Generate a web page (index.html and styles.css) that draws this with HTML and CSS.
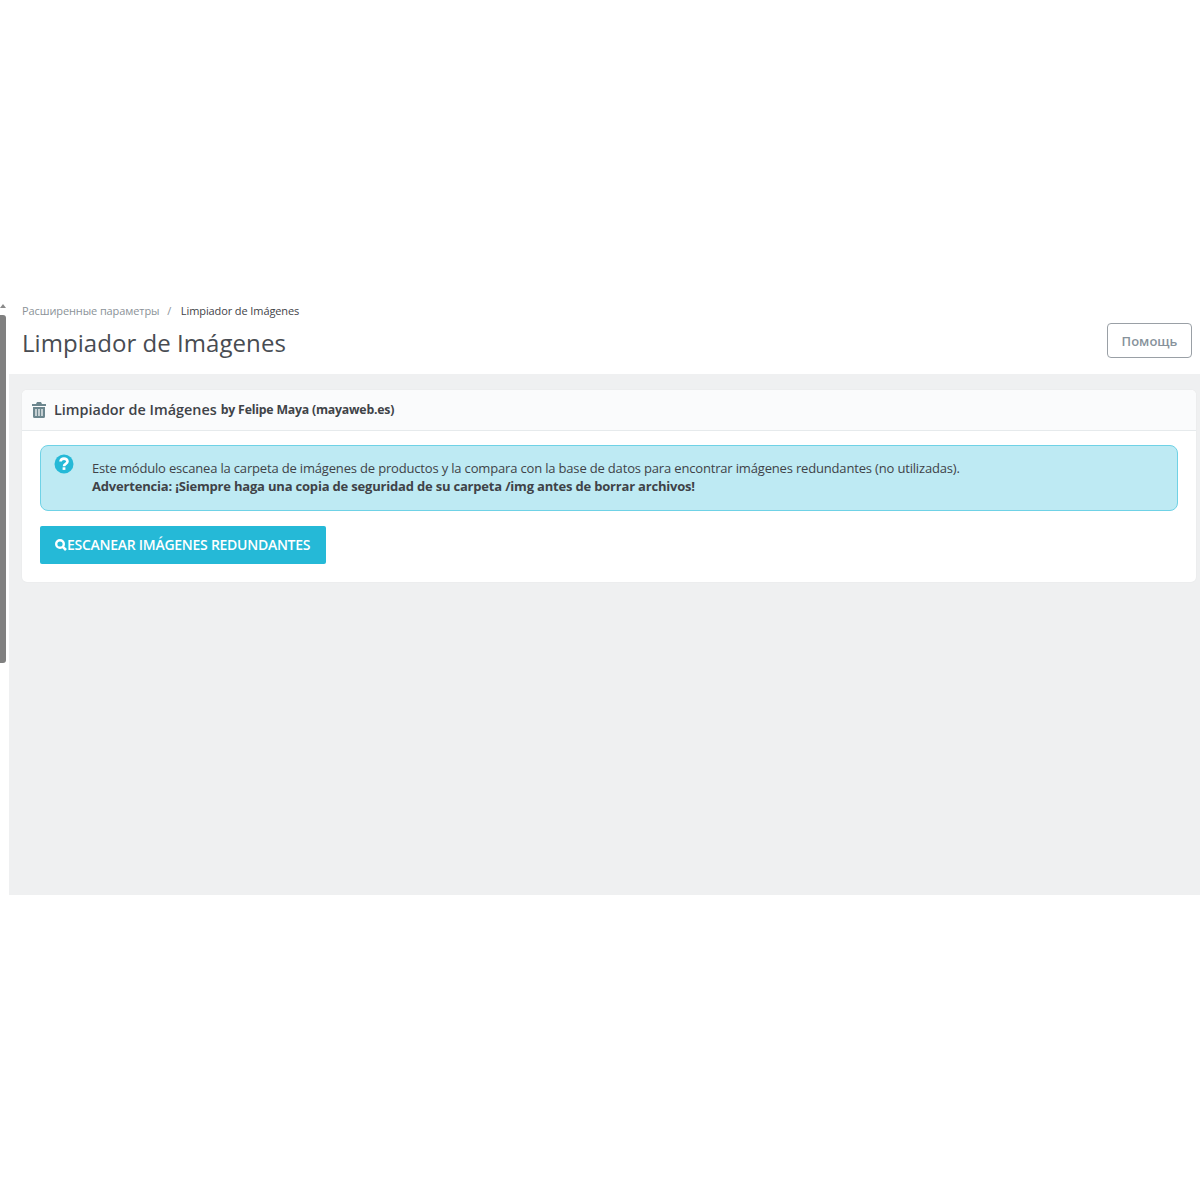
FILE: index.html
```html
<!DOCTYPE html>
<html lang="en">
<head>
    <meta charset="UTF-8">
    <title>Limpiador de Imágenes</title>
    <link rel="stylesheet" href="styles.css">
</head>
<body>
    <div class="screen">
        <!-- Scrollbar -->
        <div class="rail">
            <span class="rail-arrow"></span>
            <span class="rail-thumb"></span>
        </div>

        <div class="main">
            <!-- Header -->
            <header class="page-head">
                <div>
                    <div class="crumbs">
                        <span class="crumb-parent">Расширенные параметры</span>
                        <span class="crumb-sep">/</span>
                        <span>Limpiador de Imágenes</span>
                    </div>
                    <h1>Limpiador de Imágenes</h1>
                </div>
                <button class="help-btn">Помощь</button>
            </header>

            <!-- Content -->
            <div class="content">
                <div class="panel">
                    <div class="panel-head">
                        <svg class="trash" viewBox="0 0 14 16" width="14" height="16">
                            <path fill="#6c868e" d="M5 0h4l1 2h4v2H0V2h4zM1 5h12v9.500a1.500 1.500 0 0 1-1.500 1.500h-9A1.500 1.500 0 0 1 1 14.500z"/>
                            <path stroke="#fff" stroke-width="1.200" d="M4 7v7M7 7v7M10 7v7"/>
                        </svg>
                        <span class="panel-title">Limpiador de Imágenes</span>
                        <span class="panel-by">by Felipe Maya (mayaweb.es)</span>
                    </div>
                    <div class="panel-body">
                        <div class="alert">
                            <svg class="alert-icon" viewBox="0 0 20 20" width="20" height="20">
                                <circle cx="10" cy="10" r="9.500" fill="#25b9d7"/>
                                <path fill="none" stroke="#fff" stroke-width="2.600" d="M6.500 7.600c0-2 1.500-3 3.500-3s3.500 1.100 3.500 2.900c0 2.500-3.500 2.300-3.500 4.700"/>
                                <rect x="8.600" y="13.300" width="2.800" height="2.600" fill="#fff"/>
                            </svg>
                            <p>Este módulo escanea la carpeta de imágenes de productos y la compara con la base de datos para encontrar imágenes redundantes (no utilizadas).<br>
                            <strong>Advertencia: ¡Siempre haga una copia de seguridad de su carpeta /img antes de borrar archivos!</strong></p>
                        </div>
                        <button class="scan-btn">
                            <svg viewBox="0 0 12 12" width="12" height="12">
                                <circle cx="5" cy="5" r="3.800" fill="none" stroke="#fff" stroke-width="2.400"/>
                                <path stroke="#fff" stroke-width="2.600" d="M7.800 7.800L11 11"/>
                            </svg>ESCANEAR IMÁGENES REDUNDANTES
                        </button>
                    </div>
                </div>
            </div>
        </div>
    </div>
</body>
</html>
```

FILE: styles.css
```css
body {
    margin: 0;
    background-color: #fff;
    font-family: "Open Sans", sans-serif;
    color: #3f4348;
}
.screen {
    display: flex;
    margin-top: 300px;
    height: 595px;
}
.rail {
    width: 9px;
    flex-shrink: 0;
    display: flex;
    flex-direction: column;
}
.rail-arrow {
    width: 0;
    height: 0;
    margin-top: 4px;
    border-left: 3px solid transparent;
    border-right: 3px solid transparent;
    border-bottom: 4px solid #8a8a8a;
}
.rail-thumb {
    width: 6px;
    height: 348px;
    margin-top: 7px;
    background-color: #808080;
    border-radius: 0 3px 3px 0;
}
.main {
    flex: 1;
    display: flex;
    flex-direction: column;
    min-width: 0;
}
.page-head {
    height: 74px;
    box-sizing: border-box;
    padding: 3px 8px 0 13px;
    display: flex;
    justify-content: space-between;
    align-items: flex-start;
    background-color: #fff;
}
.crumbs {
    font-size: 11px;
    line-height: 15px;
    letter-spacing: -0.1px;
}
.crumb-parent {
    color: #8b9298;
}
.crumb-sep {
    margin: 0 7px 0 5px;
    color: #8b9298;
}
h1 {
    margin: 8px 0 0;
    font-size: 24px;
    font-weight: 400;
    line-height: 33px;
    letter-spacing: 0.05px;
    color: #484c52;
}
.help-btn {
    width: 85px;
    height: 35px;
    margin-top: 20px;
    padding: 0;
    border: 1px solid #9aa0a6;
    border-radius: 4px;
    background-color: #fff;
    color: #87929b;
    font-family: "Open Sans", sans-serif;
    font-size: 13px;
    font-weight: 600;
}
.content {
    flex: 1;
    padding: 16px 4px 0 13px;
    background-color: #eff0f1;
}
.panel {
    background-color: #fff;
    border-radius: 5px;
    box-shadow: 0 0 2px rgba(0, 0, 0, 0.06);
}
.panel-head {
    height: 41px;
    box-sizing: border-box;
    padding: 0 10px 1px;
    display: flex;
    align-items: center;
    background-color: #fafbfc;
    border-bottom: 1px solid #e6eaec;
    border-radius: 5px 5px 0 0;
}
.trash {
    margin-right: 8px;
}
.panel-title {
    font-size: 14.4px;
    font-weight: 600;
    margin-right: 4px;
}
.panel-by {
    font-size: 12.3px;
    font-weight: 700;
    letter-spacing: -0.21px;
}
.panel-body {
    padding: 14px 18px 18px;
}
.alert {
    display: flex;
    height: 66px;
    box-sizing: border-box;
    padding: 5px 14px;
    background-color: #beeaf3;
    border: 1px solid #6fd2e6;
    border-radius: 8px;
}
.alert-icon {
    flex-shrink: 0;
    margin: 3px 18px 0 -1px;
}
.alert p {
    margin: 8px 0 0;
    font-size: 13px;
    line-height: 18px;
    letter-spacing: -0.17px;
}
.alert strong {
    letter-spacing: -0.19px;
}
.scan-btn {
    display: flex;
    align-items: center;
    height: 38px;
    margin-top: 15px;
    padding: 0 16px 1px 15px;
    border: none;
    border-radius: 2px;
    background-color: #25b9d7;
    color: #fff;
    font-family: "Open Sans", sans-serif;
    font-size: 14px;
    font-weight: 600;
    letter-spacing: -0.27px;
}
```
